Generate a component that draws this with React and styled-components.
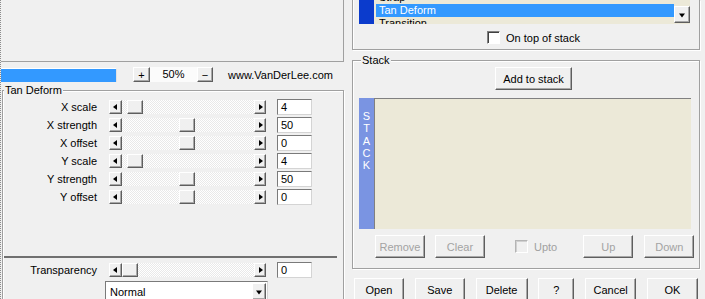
import React from 'react'
import styled, { createGlobalStyle } from 'styled-components'

const GlobalStyle = createGlobalStyle`
  html, body {
    margin: 0;
    padding: 0;
    background: #f0f0f0;
  }
  body {
    font-family: 'Liberation Sans', Arial, sans-serif;
    font-size: 11px;
    color: #000;
  }
`

const Window = styled.div`
  display: flex;
  width: 705px;
  height: 299px;
  overflow: hidden;
  box-sizing: border-box;
  border-left: 1px dotted #8c8c8c;
  background: #f0f0f0;
`

/* ---------- left side ---------- */

const LeftCol = styled.div`
  display: flex;
  flex-direction: column;
  flex-shrink: 0;
  width: 343px;
`

const PreviewPanel = styled.div`
  box-sizing: border-box;
  height: 62px;
  flex-shrink: 0;
  border-right: 1px solid #a0a0a0;
  border-bottom: 1px solid #a0a0a0;
`

const ZoomBar = styled.div`
  display: flex;
  align-items: center;
  height: 15px;
  margin-top: 5px;
  flex-shrink: 0;
`

const Progress = styled.div`
  box-sizing: border-box;
  width: 116px;
  height: 14px;
  background: #3399ff;
  border-top: 1px solid #fff;
  border-right: 1px solid #e2e2e2;
`

const ZoomValue = styled.div`
  width: 47px;
  height: 15px;
  line-height: 15px;
  text-align: center;
  background: #fbfbfb;
`

const SiteLink = styled.span`
  margin-left: 15px;
  white-space: nowrap;
`

const GroupBox = styled.fieldset`
  margin: ${p => p.$margin || '0'};
  padding: 0;
  min-width: 0;
  border: 1px solid #a0a0a0;
  box-shadow: inset 1px 1px 0 #fff, 1px 1px 0 #fff;
  flex-shrink: 0;
  height: ${p => (p.$h ? `${p.$h}px` : 'auto')};
`

const Legend = styled.legend`
  margin-left: ${p => p.$indent || 1}px;
  padding: 0 1px;
  line-height: 13px;
  background: #f0f0f0;
`

const Sliders = styled.div`
  padding-top: 1px;
`

const SliderRow = styled.div`
  display: flex;
  align-items: center;
  height: 18px;
`

const RowLabel = styled.div`
  width: 94px;
  margin-right: 12px;
  text-align: right;
  white-space: nowrap;
`

const bevel = `
  box-sizing: border-box;
  background: #f0f0f0;
  border: 1px solid;
  border-color: #fff #5e5e5e #5e5e5e #fff;
  box-shadow: inset -1px -1px 0 #a8a8a8;
`

const ArrowButton = styled.div`
  ${bevel}
  position: relative;
  width: ${p => p.$w}px;
  height: 14px;
  flex-shrink: 0;

  &::after {
    content: '';
    position: absolute;
    top: 3px;
    left: ${p => (p.$dir === 'left' ? 3 : 4)}px;
    border-top: 3.5px solid transparent;
    border-bottom: 3.5px solid transparent;
    ${p =>
      p.$dir === 'left'
        ? 'border-right: 4px solid #000;'
        : 'border-left: 4px solid #000;'}
  }
`

const Track = styled.div`
  position: relative;
  width: 132px;
  height: 14px;
  flex-shrink: 0;
  background-color: #f6f6f6;
  background-image: repeating-conic-gradient(#ffffff 0 25%, #e9e9e9 0 50%);
  background-size: 2px 2px;
`

const Thumb = styled.div`
  ${bevel}
  position: absolute;
  top: 0;
  width: 16px;
  height: 14px;
`

const ValueBox = styled.div`
  box-sizing: border-box;
  width: 35px;
  height: 16px;
  margin-left: 11px;
  padding-left: 3px;
  line-height: 14px;
  background: #fff;
  border: 1px solid;
  border-color: #7a7a7a #d4d4d4 #d4d4d4 #7a7a7a;
`

const Separator = styled.div`
  margin: ${p => p.$top}px 6px 0 1px;
  border-top: 2px solid #707070;
`

const Select = styled.div`
  box-sizing: border-box;
  display: flex;
  align-items: center;
  justify-content: space-between;
  width: 163px;
  height: 21px;
  margin: 2px 0 0 102px;
  padding: 0 1px 0 4px;
  background: #fff;
  border: 1px solid;
  border-color: #7a7a7a #d4d4d4 #d4d4d4 #7a7a7a;
`

const DropButton = styled.div`
  ${bevel}
  position: relative;
  width: ${p => p.$w || 14}px;
  height: ${p => p.$h || 17}px;
  margin-top: ${p => p.$top || 0}px;

  &::after {
    content: '';
    position: absolute;
    left: 50%;
    top: 50%;
    transform: translate(-50%, -40%);
    border-left: 3.5px solid transparent;
    border-right: 3.5px solid transparent;
    border-top: 4px solid #000;
  }
`

/* ---------- right side ---------- */

const RightCol = styled.div`
  display: flex;
  flex-direction: column;
  flex-shrink: 0;
  width: 348px;
  margin-left: 8px;
`

const TopGroup = styled.div`
  box-sizing: border-box;
  height: 50px;
  flex-shrink: 0;
  border: 1px solid #a0a0a0;
  border-top: none;
  box-shadow: inset 1px 0 0 #fff, 1px 1px 0 #fff;
`

const ComboList = styled.div`
  display: flex;
  width: 331px;
  height: 24px;
  margin-left: 6px;
  overflow: hidden;
`

const Strip = styled.div`
  width: 15px;
  flex-shrink: 0;
  background: ${p => p.$color};
  color: #fff;
  display: flex;
  flex-direction: column;
  align-items: center;
  padding-top: ${p => p.$pad || 0}px;
  box-sizing: border-box;
`

const StripLetter = styled.span`
  line-height: 12.3px;
`

const Items = styled.div`
  flex: 1;
  background: #ece9d8;
  overflow: hidden;
`

const ItemList = styled.div`
  margin-top: -9px;
`

const Item = styled.div`
  height: 13px;
  line-height: 13px;
  margin-left: 2px;
  padding-left: 3px;
  white-space: nowrap;
  background: ${p => (p.$selected ? '#3399ff' : 'transparent')};
  color: ${p => (p.$selected ? '#fff' : '#000')};
`

const ScrollCol = styled.div`
  width: 16px;
  flex-shrink: 0;
  background: #ece9d8;
`

const CheckRow = styled.div`
  display: flex;
  align-items: center;
  margin: ${p => p.$margin || '0'};
  color: ${p => (p.$disabled ? '#a0a0a0' : '#000')};
`

const CheckBox = styled.div`
  box-sizing: border-box;
  width: 13px;
  height: 13px;
  flex-shrink: 0;
  margin-right: 6px;
  background: ${p => (p.$disabled ? '#f0f0f0' : '#fff')};
  border: 1px solid;
  border-color: ${p =>
    p.$disabled ? '#b4b4b4 #fff #fff #b4b4b4' : '#808080 #fff #fff #808080'};
  box-shadow: inset 1px 1px 0 ${p => (p.$disabled ? '#d0d0d0' : '#404040')};
`

const Button = styled.div`
  ${bevel}
  display: flex;
  align-items: center;
  justify-content: center;
  flex-shrink: 0;
  width: ${p => p.$w}px;
  height: ${p => p.$h || 23}px;
  margin-left: ${p => p.$ml || 0}px;
  color: ${p => (p.$disabled ? '#a3a3a3' : '#000')};
  white-space: nowrap;
`

const StackList = styled.div`
  display: flex;
  width: 332px;
  height: 131px;
  margin: 8px 0 0 6px;
`

const StackBody = styled.div`
  flex: 1;
  background: #ece9d8;
  border-top: 1px solid #808080;
  border-left: 1px solid #808080;
`

const ActionRow = styled.div`
  display: flex;
  align-items: center;
  height: 21px;
  margin-top: 7px;
  padding: 0 0 11px 22px;
`

const BottomRow = styled.div`
  display: flex;
  justify-content: space-between;
  margin-top: 9px;
  padding: 0 2px;
`

const sliders = [
  { label: 'X scale', value: 4, min: 0, max: 100 },
  { label: 'X strength', value: 50, min: 0, max: 100 },
  { label: 'X offset', value: 0, min: -100, max: 100 },
  { label: 'Y scale', value: 4, min: 0, max: 100 },
  { label: 'Y strength', value: 50, min: 0, max: 100 },
  { label: 'Y offset', value: 0, min: -100, max: 100 },
]

const Slider = ({ label, value, min, max }) => {
  const left = ((value - min) / (max - min)) * 114
  return (
    <SliderRow>
      <RowLabel>{label}</RowLabel>
      <ArrowButton $w={13} $dir="left" />
      <Track>
        <Thumb style={{ left: `${left}px` }} />
      </Track>
      <ArrowButton $w={12} $dir="right" />
      <ValueBox>{value}</ValueBox>
    </SliderRow>
  )
}

const App = () => {
  return (
    <>
      <GlobalStyle />
      <Window>
        <LeftCol>
          <PreviewPanel />
          <ZoomBar>
            <Progress />
            <Button $w={17} $h={15} $ml={16}>+</Button>
            <ZoomValue>50%</ZoomValue>
            <Button $w={16} $h={15}>−</Button>
            <SiteLink>www.VanDerLee.com</SiteLink>
          </ZoomBar>
          <GroupBox $margin="2px 0 0 1px" $h={240}>
            <Legend>Tan Deform</Legend>
            <Sliders>
              {sliders.map(s => (
                <Slider key={s.label} {...s} />
              ))}
            </Sliders>
            <Separator $top={50} />
            <SliderRow style={{ marginTop: 3 }}>
              <RowLabel>Transparency</RowLabel>
              <ArrowButton $w={13} $dir="left" />
              <Track>
                <Thumb style={{ left: 0 }} />
              </Track>
              <ArrowButton $w={12} $dir="right" />
              <ValueBox>0</ValueBox>
            </SliderRow>
            <Select>
              <span>Normal</span>
              <DropButton $w={14} $h={17} />
            </Select>
          </GroupBox>
        </LeftCol>

        <RightCol>
          <TopGroup>
            <ComboList>
              <Strip $color="#0b3bcc" />
              <Items>
                <ItemList>
                  <Item>Strap</Item>
                  <Item $selected>Tan Deform</Item>
                  <Item>Transition</Item>
                </ItemList>
              </Items>
              <ScrollCol>
                <DropButton $w={16} $h={17} $top={6} />
              </ScrollCol>
            </ComboList>
            <CheckRow $margin="7px 0 0 134px">
              <CheckBox />
              <span>On top of stack</span>
            </CheckRow>
          </TopGroup>

          <GroupBox $margin="4px 0 0 0">
            <Legend $indent={8}>Stack</Legend>
            <Button $w={77} $ml={142}>Add to stack</Button>
            <StackList>
              <Strip $color="#7a94e2" $pad={12}>
                {'STACK'.split('').map((c, i) => (
                  <StripLetter key={i}>{c}</StripLetter>
                ))}
              </Strip>
              <StackBody />
            </StackList>
            <ActionRow>
              <Button $w={50} $disabled>Remove</Button>
              <Button $w={50} $ml={10} $disabled>Clear</Button>
              <CheckRow $margin="0 0 0 30px" $disabled>
                <CheckBox $disabled />
                <span>Upto</span>
              </CheckRow>
              <Button $w={50} $ml={26} $disabled>Up</Button>
              <Button $w={50} $ml={11} $disabled>Down</Button>
            </ActionRow>
          </GroupBox>

          <BottomRow>
            <Button $w={50}>Open</Button>
            <Button $w={50}>Save</Button>
            <Button $w={52}>Delete</Button>
            <Button $w={36}>?</Button>
            <Button $w={51}>Cancel</Button>
            <Button $w={51}>OK</Button>
          </BottomRow>
        </RightCol>
      </Window>
    </>
  )
}

export default App
